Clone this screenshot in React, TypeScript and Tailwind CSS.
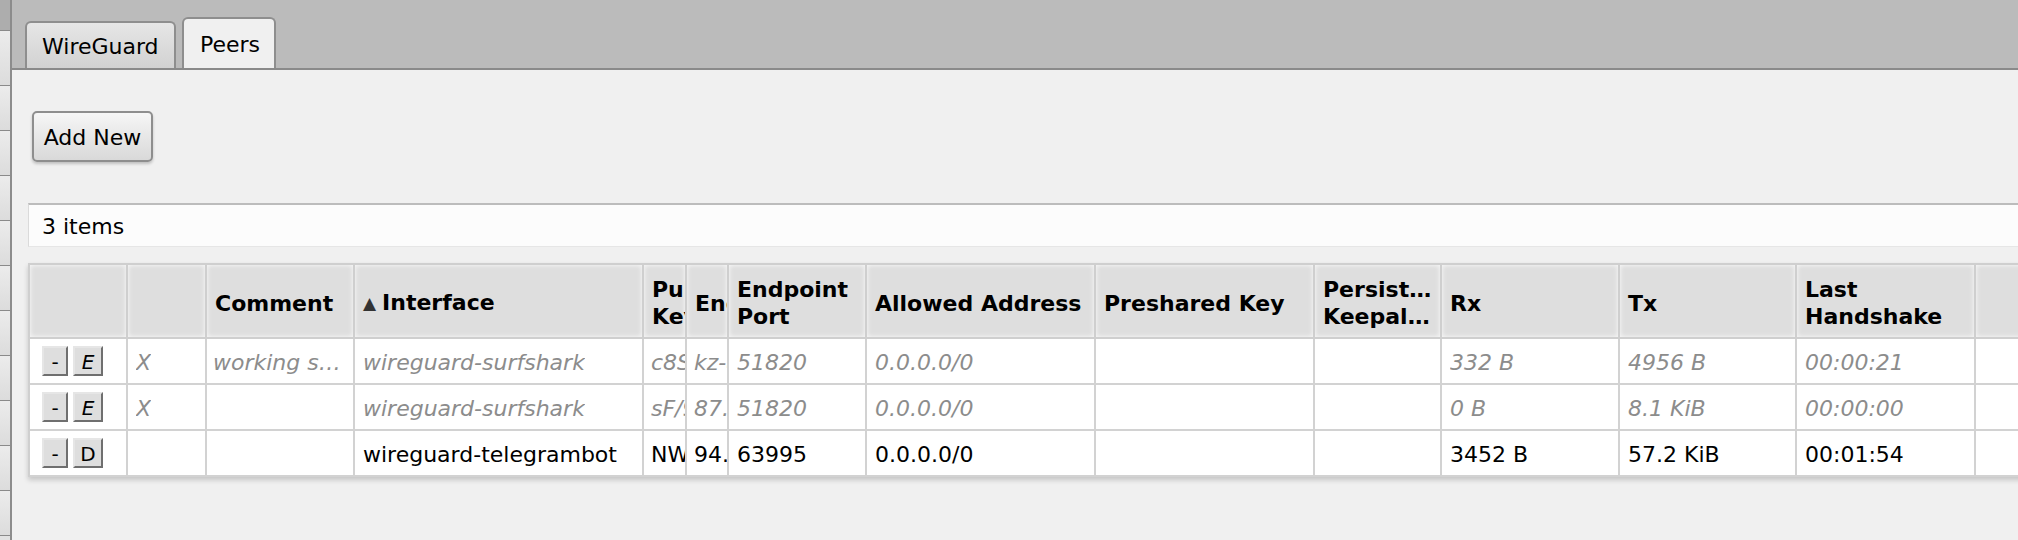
const font = { fontFamily: '"DejaVu Sans", Verdana, sans-serif' }

const cols = [98, 79, 148, 289, 43, 42, 138, 229, 219, 127, 178, 177, 179, 140]

type Row = {
  disabled: boolean
  action: string
  cells: string[]
}

const rows: Row[] = [
  {
    disabled: true,
    action: 'E',
    cells: ['X', 'working surfshark', 'wireguard-surfshark', 'c8SqT3pLk0vX', 'kz-ala.prod.surfshark.com', '51820', '0.0.0.0/0', '', '', '332 B', '4956 B', '00:00:21', ''],
  },
  {
    disabled: true,
    action: 'E',
    cells: ['X', '', 'wireguard-surfshark', 'sF/9aKq2Lm', '87.120.37.12', '51820', '0.0.0.0/0', '', '', '0 B', '8.1 KiB', '00:00:00', ''],
  },
  {
    disabled: false,
    action: 'D',
    cells: ['', '', 'wireguard-telegrambot', 'NWk8xP2qLr', '94.131.9.44', '63995', '0.0.0.0/0', '', '', '3452 B', '57.2 KiB', '00:01:54', ''],
  },
]

function SideStrip() {
  const segs = [55, 45, 45, 45, 45, 45, 45, 45, 45, 45, 45]
  return (
    <div className="flex w-[12px] shrink-0 flex-col border-r-2 border-[#8c8c8c] bg-[#e2e2e2]">
      <div className="h-[31px] shrink-0 border-b border-[#8a8a8a] bg-[#adadad]" />
      {segs.map((h, i) => (
        <div
          key={i}
          style={{ height: h }}
          className="shrink-0 border-b border-[#8a8a8a] bg-gradient-to-b from-[#ececec] to-[#dcdcdc]"
        />
      ))}
    </div>
  )
}

function Tabs() {
  return (
    <div className="flex h-[70px] shrink-0 items-end gap-[6px] border-b-2 border-[#8a8a8a] bg-[#bbbbbb] pl-[13px]">
      <div className="flex h-[47px] w-[151px] items-center rounded-t-[6px] border-2 border-b-0 border-[#8e8e8e] bg-gradient-to-b from-[#e6e6e6] to-[#d2d2d2] pt-[2px] pl-[15px] text-[22px] text-black">
        WireGuard
      </div>
      <div className="flex h-[51px] w-[94px] items-center rounded-t-[6px] border-2 border-b-0 border-[#8e8e8e] bg-[#f0f0f0] pt-[2px] pl-[16px] text-[22px] text-black">
        Peers
      </div>
    </div>
  )
}

function RowButton({ label, italic }: { label: string; italic: boolean }) {
  return (
    <div
      className={
        'flex h-[30px] items-center justify-center border-2 border-t-[#e6e6e6] border-l-[#e6e6e6] border-r-[#6f6f6f] border-b-[#6f6f6f] bg-[#dedede] pt-[1px] text-[20px] text-black ' +
        (italic ? 'italic' : '')
      }
    >
      {label}
    </div>
  )
}

function HeaderRow() {
  const labels: (string | string[])[] = [
    '',
    '',
    'Comment',
    'Interface',
    'Public Key',
    'Endpoint',
    'Endpoint Port',
    'Allowed Address',
    'Preshared Key',
    ['Persistent', 'Keepalive'],
    'Rx',
    'Tx',
    'Last Handshake',
    '',
  ]
  return (
    <div className="flex h-[74px] border-b-2 border-[#cfcfcf]">
      {labels.map((l, i) => (
        <div
          key={i}
          style={{ width: cols[i] }}
          className="flex shrink-0 items-center overflow-hidden border-r-2 border-[#cfcfcf] bg-[#dedede] px-[8px] pt-[4px] text-[22px] leading-[27px] font-bold text-black shadow-[inset_0_0_5px_rgba(255,255,255,0.9)]"
        >
          {Array.isArray(l) ? (
            <div className="min-w-0 flex-1">
              {l.map((s) => (
                <div key={s} className="truncate">
                  {s}
                </div>
              ))}
            </div>
          ) : i === 3 ? (
            <span className="whitespace-nowrap">
              <span className="mr-[6px] align-[1px] text-[17px] text-[#333]">▲</span>
              {l}
            </span>
          ) : i === 5 ? (
            <span className="whitespace-nowrap">{l}</span>
          ) : (
            <span>{l}</span>
          )}
        </div>
      ))}
    </div>
  )
}

function BodyRow({ row }: { row: Row }) {
  return (
    <div className="flex h-[46px] border-b-2 border-[#d2d2d2] bg-white">
      <div
        style={{ width: cols[0] }}
        className="flex shrink-0 items-center gap-[5px] border-r-2 border-[#d2d2d2] pl-[12px]"
      >
        <div className="w-[26px]">
          <RowButton label="-" italic={false} />
        </div>
        <div className="w-[30px]">
          <RowButton label={row.action} italic={row.disabled} />
        </div>
      </div>
      {row.cells.map((c, i) => (
        <div
          key={i}
          style={{ width: cols[i + 1] }}
          className={
            'flex shrink-0 items-center overflow-hidden border-r-2 border-[#d2d2d2] pt-[3px] text-[22px] ' +
            (i === 3 || i === 4 ? 'pl-[7px]' : i === 1 ? 'pl-[6px] pr-[8px]' : 'px-[8px]') +
            ' ' +
            (row.disabled ? 'italic text-[#8c8c8c]' : 'text-black')
          }
        >
          <span className={i === 3 || i === 4 ? 'whitespace-nowrap' : 'truncate'}>{c}</span>
        </div>
      ))}
    </div>
  )
}

export default function App() {
  return (
    <div style={font} className="flex h-[540px] w-[2018px] overflow-hidden bg-[#f0f0f0]">
      <SideStrip />
      <div className="flex min-w-0 flex-1 flex-col overflow-hidden">
        <Tabs />
        <div className="flex flex-col pl-[16px]">
          <div className="mt-[41px] ml-[4px] flex h-[51px] w-[121px] items-center justify-center rounded-[5px] border-2 border-[#8e8e8e] bg-gradient-to-b from-[#f6f6f6] to-[#d9d9d9] pt-[2px] text-[22px] text-black shadow-[0_2px_3px_rgba(0,0,0,0.2)]">
            Add New
          </div>
          <div className="mt-[41px] flex h-[44px] w-[2100px] items-center border-t-2 border-l border-b border-t-[#bcbcbc] border-l-[#dadada] border-b-[#e6e6e6] bg-[#fcfcfc] pt-[2px] pl-[13px] text-[22px] text-black">
            3 items
          </div>
          <div className="mt-[16px] w-[2100px] border-t-2 border-l-2 border-[#cfcfcf] shadow-[0_3px_5px_rgba(0,0,0,0.18)]">
            <HeaderRow />
            {rows.map((r, i) => (
              <BodyRow key={i} row={r} />
            ))}
          </div>
        </div>
      </div>
    </div>
  )
}
